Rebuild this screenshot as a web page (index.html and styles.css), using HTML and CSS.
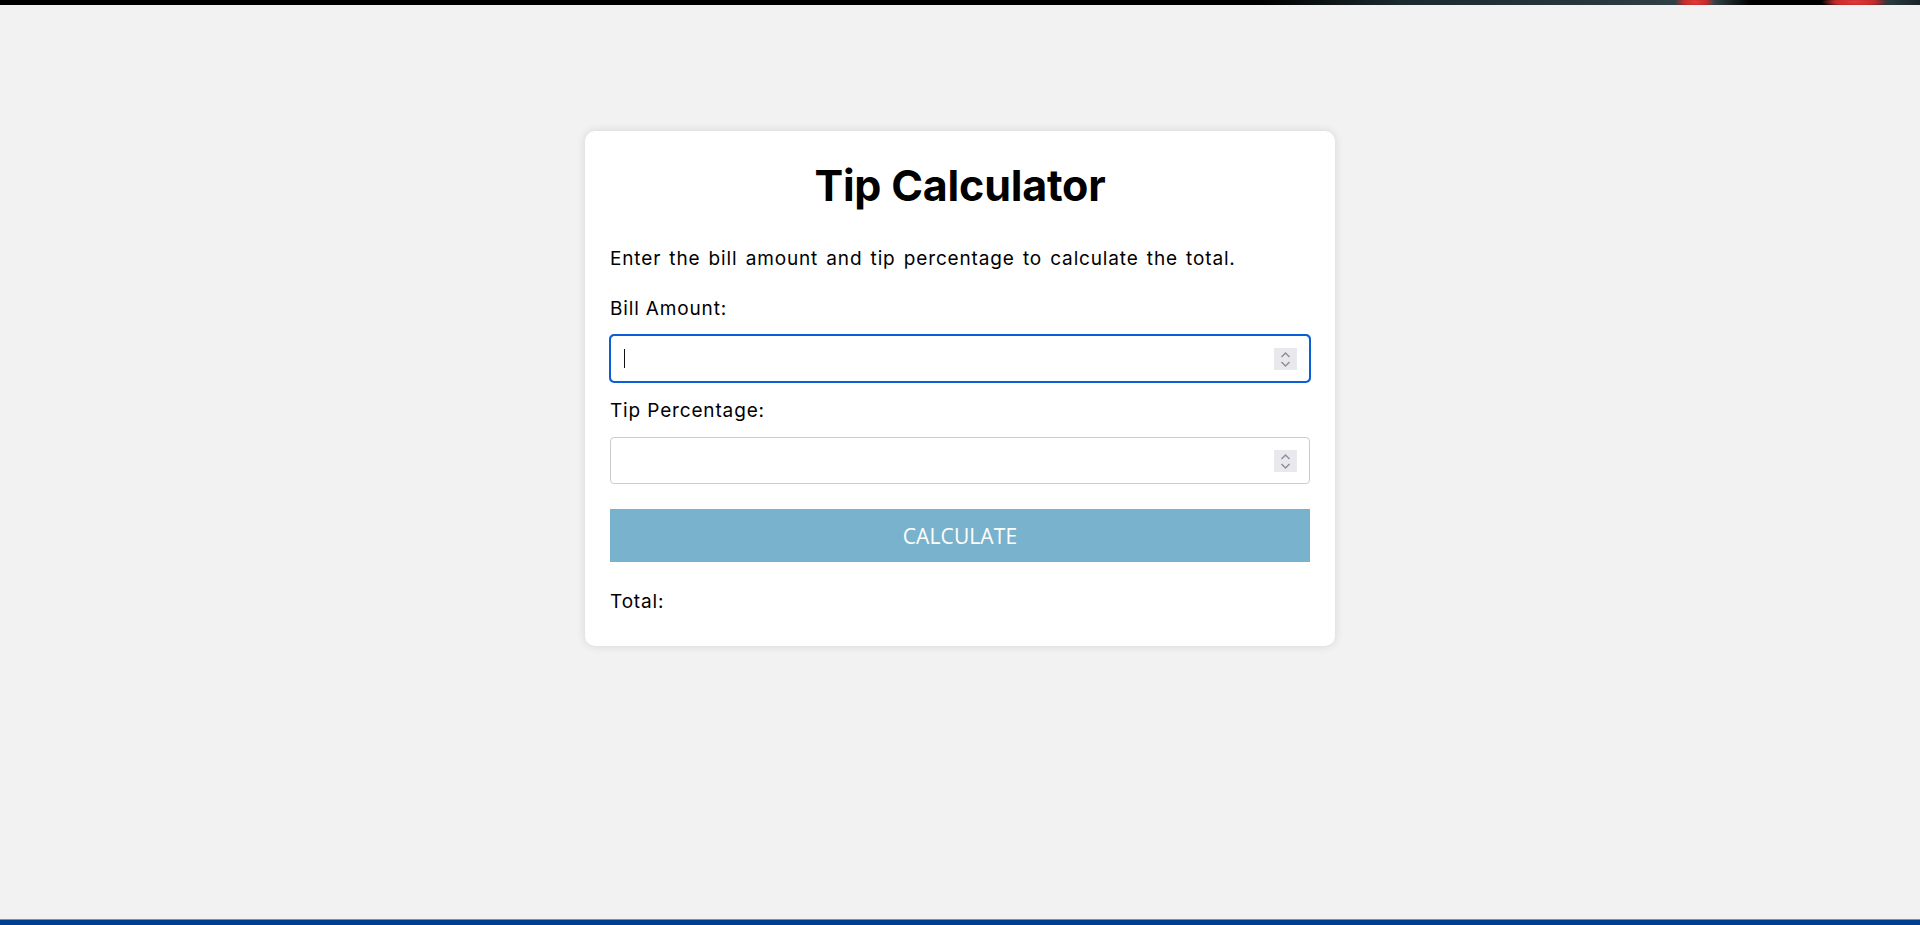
FILE: index.html
```html
<!DOCTYPE html>
<html lang="en">
<head>
<meta charset="utf-8">
<title>Tip Calculator</title>
<link rel="stylesheet" href="styles.css">
</head>
<body>
<div class="page">
  <div class="topbar"></div>
  <main class="main">
    <section class="card">
      <h1 class="title">Tip Calculator</h1>
      <p class="intro">Enter the bill amount and tip percentage to calculate the total.</p>
      <label class="label" for="bill">Bill Amount:</label>
      <div class="field field-focus">
        <span class="caret"></span>
        <input class="field-input" id="bill" type="text" value="">
        <span class="spin">
          <svg width="23" height="22" viewBox="0 0 23 22"><path d="M7.5 9 L11.5 5 L15.5 9" fill="none" stroke="#8f8f9d" stroke-width="1.5"/><path d="M7.5 14 L11.5 18 L15.5 14" fill="none" stroke="#8f8f9d" stroke-width="1.5"/></svg>
        </span>
      </div>
      <label class="label" for="tip">Tip Percentage:</label>
      <div class="field">
        <input class="field-input" id="tip" type="text" value="">
        <span class="spin">
          <svg width="23" height="22" viewBox="0 0 23 22"><path d="M7.5 9 L11.5 5 L15.5 9" fill="none" stroke="#8f8f9d" stroke-width="1.5"/><path d="M7.5 14 L11.5 18 L15.5 14" fill="none" stroke="#8f8f9d" stroke-width="1.5"/></svg>
        </span>
      </div>
      <button class="btn" type="button">CALCULATE</button>
      <p class="total">Total:</p>
    </section>
  </main>
  <div class="bottombar"></div>
</div>
</body>
</html>
```
FILE: styles.css
```css
html, body {
  margin: 0;
  padding: 0;
}
body {
  background: #f2f2f2;
  font-family: "Inter", "Open Sans", sans-serif;
  color: #000;
}
.page {
  height: 100vh;
  display: grid;
  grid-template-rows: 5px 1fr 6px;
}
.topbar {
  background:
    radial-gradient(ellipse 20px 6px at 1695px 2px, #e23b3b 0%, #c42a2a 60%, rgba(0,0,0,0) 100%),
    radial-gradient(ellipse 34px 6px at 1855px 2px, #e23b3b 0%, #c42a2a 60%, rgba(0,0,0,0) 100%),
    linear-gradient(90deg, #000 0, #000 1260px, #1b2a2e 1400px, #28383c 1600px, #34454a 1713px, #000 1750px, #000 1823px, #2a3a3d 1890px, #1a2427 1920px);
}
.bottombar {
  background: #003e8f;
  border-top: 1px solid #7f8fa8;
}
.main {
  display: flex;
  justify-content: center;
  align-items: flex-start;
}
.card {
  width: 750px;
  box-sizing: border-box;
  margin-top: 126px;
  padding: 25px 25px 31px;
  background: #fff;
  border-radius: 10px;
  box-shadow: 0 0 10px rgba(0, 0, 0, 0.12);
  display: flex;
  flex-direction: column;
}
.title {
  margin: 3px 0 34px;
  font-size: 43px;
  line-height: 52px;
  font-weight: 700;
  text-align: center;
  letter-spacing: -0.2px;
}
.intro,
.label,
.total {
  font-size: 19px;
  line-height: 27px;
  letter-spacing: 0.85px;
}
.intro {
  margin: 0 0 23px;
  word-spacing: 2px;
}
.label {
  display: block;
  margin: 0 0 13px;
}
.field {
  height: 47px;
  box-sizing: border-box;
  border: 1px solid #cccccc;
  border-radius: 4px;
  display: flex;
  align-items: center;
  padding: 0 12px 0 13px;
  margin-bottom: 15px;
  background: #fff;
}
.field-focus {
  border-color: #0b5fd6;
  outline: 2px solid #0b5fd6;
  outline-offset: -1px;
}
.caret {
  width: 1px;
  height: 19px;
  background: #111;
  flex: none;
}
.field-input {
  flex: 1;
  min-width: 0;
  border: 0;
  outline: 0;
  background: transparent;
  font-family: "Inter", sans-serif;
  font-size: 18px;
  padding: 0;
  margin: 0;
}
.spin {
  flex: none;
  width: 23px;
  height: 22px;
  background: #e9e9ed;
  display: flex;
}
.btn {
  margin-top: 10px;
  height: 53px;
  border: 0;
  background: #78b2cc;
  color: #fff;
  font-family: "Open Sans", sans-serif;
  font-size: 21px;
  padding: 0;
  cursor: pointer;
  letter-spacing: 0.1px;
}
.total {
  margin: 26px 0 0;
}
```
